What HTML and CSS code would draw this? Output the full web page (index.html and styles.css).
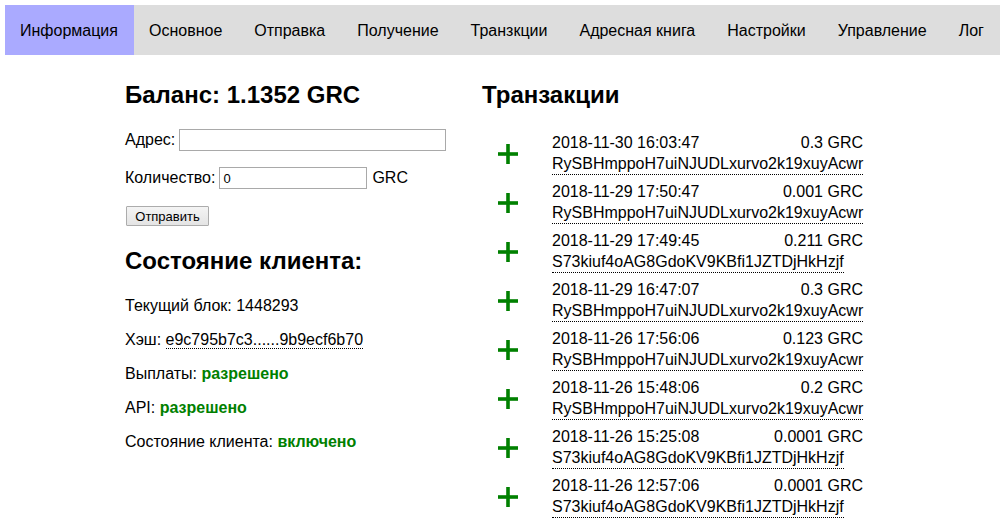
FILE: index.html
```html
<!DOCTYPE html>
<html lang="ru">
<head>
<meta charset="utf-8">
<title>Информация</title>
<link rel="stylesheet" href="styles.css">
</head>
<body>
<nav class="nav">
  <a class="tab active">Информация</a>
  <a class="tab">Основное</a>
  <a class="tab">Отправка</a>
  <a class="tab">Получение</a>
  <a class="tab">Транзкции</a>
  <a class="tab">Адресная книга</a>
  <a class="tab">Настройки</a>
  <a class="tab">Управление</a>
  <a class="tab">Лог</a>
</nav>
<main class="main">
  <section class="left">
    <h2 class="title">Баланс: 1.1352 GRC</h2>
    <div class="row">
      <label>Адрес:</label>
      <input class="addr-input" type="text">
    </div>
    <div class="row">
      <label>Количество:</label>
      <input class="amt-input" type="text" value="0">
      <span>GRC</span>
    </div>
    <button class="btn">Отправить</button>
    <h2 class="title state">Состояние клиента:</h2>
    <p class="info">Текущий блок: 1448293</p>
    <p class="info">Хэш: <span class="dotted">e9c795b7c3......9b9ecf6b70</span></p>
    <p class="info">Выплаты: <b class="ok">разрешено</b></p>
    <p class="info">API: <b class="ok">разрешено</b></p>
    <p class="info">Состояние клиента: <b class="ok">включено</b></p>
  </section>
  <section class="right">
    <h2 class="title">Транзакции</h2>
    <div class="tx-list">
      <div class="tx">
        <svg class="plus" viewBox="0 0 20 20"><rect x="0" y="8.2" width="20" height="3.6"/><rect x="8.2" y="0" width="3.6" height="20"/></svg>
        <div class="tx-body">
          <div class="tx-top"><span>2018-11-30 16:03:47</span><span>0.3 GRC</span></div>
          <span class="dotted">RySBHmppoH7uiNJUDLxurvo2k19xuyAcwr</span>
        </div>
      </div>
      <div class="tx">
        <svg class="plus" viewBox="0 0 20 20"><rect x="0" y="8.2" width="20" height="3.6"/><rect x="8.2" y="0" width="3.6" height="20"/></svg>
        <div class="tx-body">
          <div class="tx-top"><span>2018-11-29 17:50:47</span><span>0.001 GRC</span></div>
          <span class="dotted">RySBHmppoH7uiNJUDLxurvo2k19xuyAcwr</span>
        </div>
      </div>
      <div class="tx">
        <svg class="plus" viewBox="0 0 20 20"><rect x="0" y="8.2" width="20" height="3.6"/><rect x="8.2" y="0" width="3.6" height="20"/></svg>
        <div class="tx-body">
          <div class="tx-top"><span>2018-11-29 17:49:45</span><span>0.211 GRC</span></div>
          <span class="dotted">S73kiuf4oAG8GdoKV9KBfi1JZTDjHkHzjf</span>
        </div>
      </div>
      <div class="tx">
        <svg class="plus" viewBox="0 0 20 20"><rect x="0" y="8.2" width="20" height="3.6"/><rect x="8.2" y="0" width="3.6" height="20"/></svg>
        <div class="tx-body">
          <div class="tx-top"><span>2018-11-29 16:47:07</span><span>0.3 GRC</span></div>
          <span class="dotted">RySBHmppoH7uiNJUDLxurvo2k19xuyAcwr</span>
        </div>
      </div>
      <div class="tx">
        <svg class="plus" viewBox="0 0 20 20"><rect x="0" y="8.2" width="20" height="3.6"/><rect x="8.2" y="0" width="3.6" height="20"/></svg>
        <div class="tx-body">
          <div class="tx-top"><span>2018-11-26 17:56:06</span><span>0.123 GRC</span></div>
          <span class="dotted">RySBHmppoH7uiNJUDLxurvo2k19xuyAcwr</span>
        </div>
      </div>
      <div class="tx">
        <svg class="plus" viewBox="0 0 20 20"><rect x="0" y="8.2" width="20" height="3.6"/><rect x="8.2" y="0" width="3.6" height="20"/></svg>
        <div class="tx-body">
          <div class="tx-top"><span>2018-11-26 15:48:06</span><span>0.2 GRC</span></div>
          <span class="dotted">RySBHmppoH7uiNJUDLxurvo2k19xuyAcwr</span>
        </div>
      </div>
      <div class="tx">
        <svg class="plus" viewBox="0 0 20 20"><rect x="0" y="8.2" width="20" height="3.6"/><rect x="8.2" y="0" width="3.6" height="20"/></svg>
        <div class="tx-body">
          <div class="tx-top"><span>2018-11-26 15:25:08</span><span>0.0001 GRC</span></div>
          <span class="dotted">S73kiuf4oAG8GdoKV9KBfi1JZTDjHkHzjf</span>
        </div>
      </div>
      <div class="tx">
        <svg class="plus" viewBox="0 0 20 20"><rect x="0" y="8.2" width="20" height="3.6"/><rect x="8.2" y="0" width="3.6" height="20"/></svg>
        <div class="tx-body">
          <div class="tx-top"><span>2018-11-26 12:57:06</span><span>0.0001 GRC</span></div>
          <span class="dotted">S73kiuf4oAG8GdoKV9KBfi1JZTDjHkHzjf</span>
        </div>
      </div>
    </div>
  </section>
</main>
</body>
</html>
```

FILE: styles.css
```css
* { box-sizing: border-box; }
html, body { margin: 0; padding: 0; background: #fff; }
body {
  font-family: "Liberation Sans", Arial, sans-serif;
  font-size: 16px;
  color: #000;
}
.nav {
  display: flex;
  margin: 5px 7px 0 5px;
  height: 50px;
  background: #dddddd;
}
.tab {
  display: flex;
  align-items: center;
  padding: 1px 17px 0 15px;
  color: #000;
  font-size: 16px;
  white-space: nowrap;
}
.tab.active { background: #aaaaff; padding-right: 16px; }

.main {
  display: grid;
  grid-template-columns: 357px auto;
  padding: 26px 0 0 125px;
}
.title {
  margin: 0;
  font-size: 24px;
  font-weight: bold;
  line-height: 28px;
}
.row {
  display: flex;
  align-items: center;
  height: 24px;
  gap: 4px;
}
.left .title { margin-bottom: 19px; }
.row + .row { margin-top: 14px; }
.row span { margin-left: 1px; }
input {
  height: 22px;
  border: 1px solid #a9a9a9;
  font-family: "Liberation Sans", Arial, sans-serif;
  font-size: 13px;
  padding: 1px 3px;
  margin: 0;
}
.addr-input { width: 267px; }
.amt-input { width: 148px; }
.btn {
  display: block;
  margin: 16px 0 0 1px;
  width: 83px;
  height: 20px;
  padding: 0;
  font-family: "Liberation Sans", Arial, sans-serif;
  font-size: 13px;
  color: #000;
  background: linear-gradient(#f4f4f4, #e4e4e4);
  border: 1px solid #acacac;
  border-radius: 1px;
}
.left .title.state { margin: 21px 0 0 0; }
.info {
  margin: 0;
  margin-top: 16px;
  line-height: 18px;
}
.state + .info { margin-top: 22px; }
.dotted {
  border-bottom: 1px dotted #000;
}
.ok { color: #008000; }

.right .title { margin-bottom: 20px; }
.tx-list { display: flex; flex-direction: column; }
.tx {
  display: flex;
  align-items: center;
  height: 49px;
}
.plus {
  width: 20px;
  height: 20px;
  margin: 0 34px 0 16px;
  fill: #008000;
  flex: none;
}
.tx-body {
  width: 311px;
  margin-top: -2px;
}
.tx-top {
  display: flex;
  justify-content: space-between;
  line-height: 23px;
}
.tx-body .dotted {
  display: inline-block;
  line-height: 20px;
}
```
